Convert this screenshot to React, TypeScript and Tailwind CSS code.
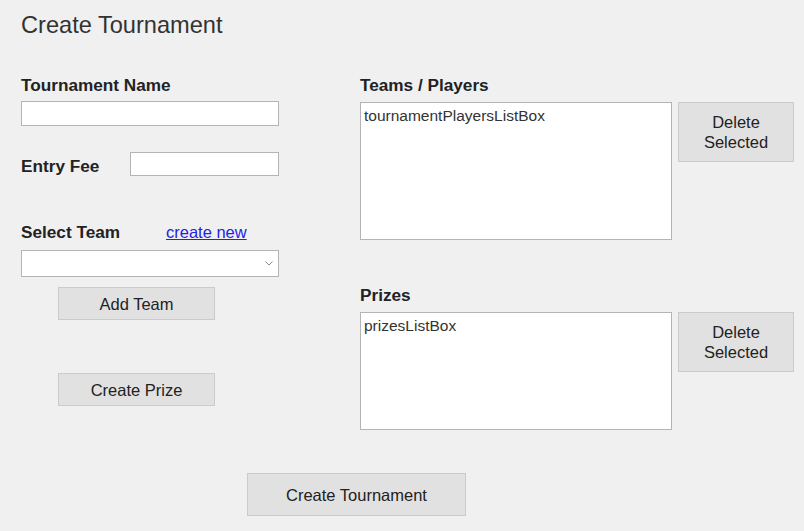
import React from "react";

const btn =
  "bg-[#e1e1e1] border border-[#cbcbcb] text-[16.5px] text-[#222] leading-[20px] flex items-center justify-center";

export default function App() {
  return (
    <div
      className="w-[804px] h-[531px] bg-[#f0f0f1] flex flex-col text-[#222]"
      style={{ fontFamily: '"Liberation Sans", Arial, sans-serif' }}
    >
      <div className="pl-[21px] pt-[12px] text-[23.6px] leading-[26px] text-[#333]">
        Create Tournament
      </div>
      <div className="flex">
        {/* Left column */}
        <div className="ml-[21px] w-[258px] flex flex-col">
          <div className="mt-[37px] h-[20px] text-[17.2px] leading-[20px] font-bold">
            Tournament Name
          </div>
          <div className="mt-[6px] h-[25px] bg-white border border-[#b4b4b4]" />
          <div className="mt-[26px] h-[24px] flex items-center">
            <div className="pt-[3px] text-[17.2px] leading-[20px] font-bold">Entry Fee</div>
            <div className="ml-auto w-[149px] h-[24px] bg-white border border-[#b4b4b4]" />
          </div>
          <div className="mt-[46px] h-[20px] flex items-center">
            <div className="w-[145px] text-[17.2px] leading-[20px] font-bold">Select Team</div>
            <a className="text-[16.5px] leading-[20px] text-[#2323e6] underline" href="#">
              create new
            </a>
          </div>
          <div className="mt-[8px] h-[27px] bg-white border border-[#b4b4b4] flex items-center justify-end pr-[5px]">
            <svg width="8" height="5" viewBox="0 0 8 5" fill="none">
              <path d="M0.5 0.5 L4 4 L7.5 0.5" stroke="#8a8a8a" strokeWidth="1" />
            </svg>
          </div>
          <div className={`${btn} mt-[10px] ml-[37px] w-[157px] h-[33px]`}>Add Team</div>
          <div className={`${btn} mt-[53px] ml-[37px] w-[157px] h-[33px]`}>Create Prize</div>
        </div>
        {/* Right column */}
        <div className="ml-[81px] flex flex-col">
          <div className="mt-[37px] h-[20px] text-[17.2px] leading-[20px] font-bold">
            Teams / Players
          </div>
          <div className="mt-[7px] flex items-start">
            <div className="w-[312px] h-[138px] bg-white border border-[#b4b4b4] px-[3px] pt-[4px] text-[15.5px] leading-[18px] text-[#333]">
              tournamentPlayersListBox
            </div>
            <div className={`${btn} ml-[6px] w-[116px] h-[60px] text-center`}>
              Delete
              <br />
              Selected
            </div>
          </div>
          <div className="mt-[45px] h-[20px] text-[17.2px] leading-[20px] font-bold">Prizes</div>
          <div className="mt-[7px] flex items-start">
            <div className="w-[312px] h-[118px] bg-white border border-[#b4b4b4] px-[3px] pt-[4px] text-[15.5px] leading-[18px] text-[#333]">
              prizesListBox
            </div>
            <div className={`${btn} ml-[6px] w-[116px] h-[60px] text-center`}>
              Delete
              <br />
              Selected
            </div>
          </div>
        </div>
      </div>
      <div className={`${btn} mt-[43px] ml-[247px] w-[219px] h-[43px]`}>Create Tournament</div>
    </div>
  );
}
